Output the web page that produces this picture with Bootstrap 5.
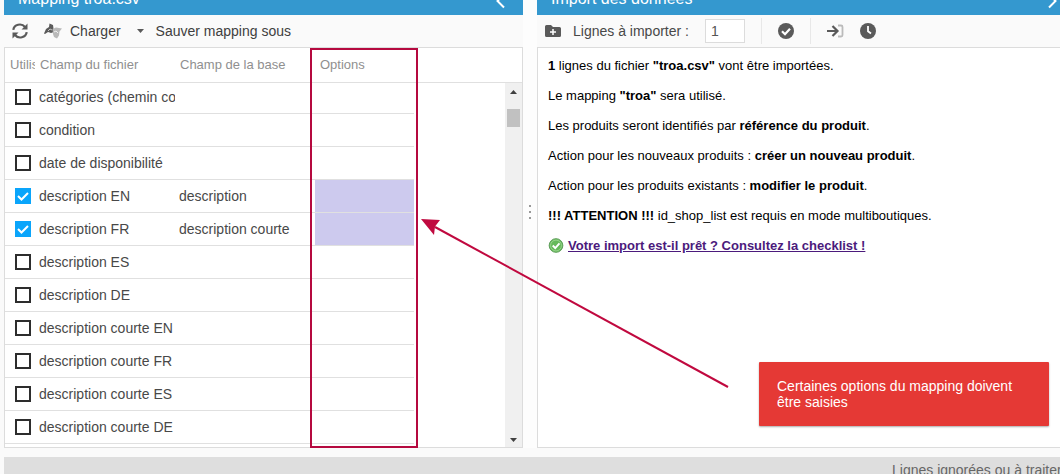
<!DOCTYPE html>
<html lang="fr">
<head>
<meta charset="utf-8">
<meta name="viewport" content="width=device-width, initial-scale=1">
<title>Import CSV</title>
<link href="https://cdn.jsdelivr.net/npm/bootstrap@5.3.0/dist/css/bootstrap.min.css" rel="stylesheet">
<style>
  body { font-family: "Liberation Sans", Arial, sans-serif; font-size: 14px; line-height: 16px; color: #484848; background: #fafafa; }
  .workspace { padding-left: 4px; padding-bottom: 9px; }
  .pane-left { flex: 0 0 calc(50% - 9px); }
  .pane-title { background: #3498cf; color: #fff; height: 15px; padding: 0 18px 6px 14px; }
  .pane-title h2 { font-size: 16px; line-height: 20px; font-weight: 400; }
  .tools { height: 33px; background: #fafafa; border-bottom: 1px solid #dcdcdc; white-space: nowrap; }
  .tools button { border: 0; background: none; padding: 0; color: #404040; line-height: 16px; display: flex; align-items: center; }
  .tools svg { color: #5a5a5a; }
  .tools input { width: 40px; height: 24px; border: 1px solid #dcdcdc; border-radius: 0; padding: 0 5px; font-size: 14px; color: #555; }
  .tool-sep { width: 1px; height: 26px; background: #e8e8e8; }
  .pane-body { background: #fff; border: 1px solid #dcdcdc; border-top: 0; }
  .splitter { width: 14px; background: #fdfdfd; }
  .splitter i { width: 2px; height: 2px; background: #999; }
  .mapping { table-layout: fixed; width: 409px; border-collapse: separate; border-spacing: 0; }
  .mapping th { height: 35px; padding: 0 5px; font-size: 13px; font-weight: 400; color: #8f8f8f; }
  .mapping th:first-child { padding-right: 1px; }
  .mapping th, .mapping td { border-bottom: 1px solid #e0e0e0; white-space: nowrap; overflow: hidden; vertical-align: middle; }
  .mapping td { height: 33px; padding: 0 0 0 4px; }
  .mapping tbody tr:first-child td { height: 31px; padding-bottom: 2px; }
  .mapping td:first-child { padding-left: 10px; }
  .mapping td.to-fill { background: #cdcaee; }
  .mapping .form-check-input { display: block; width: 16px; height: 16px; margin: 0; border: 2px solid #2d2d2d; border-radius: 0; background-color: #fff; }
  .mapping .form-check-input:checked { border-color: #0aa5fb; background-color: #0aa5fb; background-size: 16px; background-position: center;
    background-image: url("data:image/svg+xml,%3Csvg xmlns='http://www.w3.org/2000/svg' viewBox='0 0 16 16'%3E%3Cpath d='M3 8l3.5 3.5L13 5' fill='none' stroke='%23fff' stroke-width='2'/%3E%3C/svg%3E"); }
  .head-rest { height: 35px; border-bottom: 1px solid #e0e0e0; }
  .scroll-track { width: 17px; background: #f0f0f0; padding: 7px 0 5px; }
  .scroll-thumb { width: 13px; height: 18px; margin-top: 15px; background: #c1c1c1; }
  .focus-frame { left: 305px; top: 0; bottom: -1px; width: 108px; border: 2px solid #b5093f; }
  .arrow-note { left: 421px; top: 218px; }
  .report { padding: 10px; font-size: 13px; line-height: 15px; color: #000; }
  .report p { margin-bottom: 15px; }
  .report a { color: #4b1a7c; }
  .alert-note { right: 11px; bottom: 48px; width: 290px; padding: 16px 18px; background: #e53935; color: #fff; box-shadow: 0 1px 2px #0005; border-radius: 1px; }
  .log-bar { height: 17px; margin-left: 4px; padding-top: 5px; background: #dedede; color: #666; white-space: nowrap; }
  .log-bar span { width: 168px; }
</style>
</head>
<body>
<div class="vh-100 d-flex flex-column overflow-hidden position-relative">
  <main class="workspace d-flex flex-grow-1">
    <section class="pane-left d-flex flex-column">
      <header class="pane-title d-flex align-items-end justify-content-between overflow-hidden">
        <h2 class="m-0">Mapping troa.csv</h2>
        <svg width="9" height="16" viewBox="0 0 9 16" fill="none" stroke="#fff" stroke-width="2"><path d="M8 1L1.500 8 8 14.500"/></svg>
      </header>
      <div class="tools d-flex align-items-center ps-2">
        <button type="button" aria-label="Actualiser"><svg width="16" height="16" viewBox="0 0 16 16" fill="none" stroke="currentColor" stroke-width="2.200"><path d="M1.300 6.800A6.500 6 0 0 1 13 4M14.700 9.200A6.500 6 0 0 1 3 12"/><path d="M15.500.5v6h-6zM.5 15.500v-6h6z" fill="currentColor" stroke="none"/></svg></button>
        <button type="button" class="ms-3"><svg class="me-2" width="18" height="16" viewBox="0 0 18 16"><path d="M0 10.500L2 6l3-2 .5-3.500L9 2l1 7-3 1-3-1-3 2z" fill="currentColor"/><path d="M4 8l2-2 2 1" stroke="#ddd" stroke-width=".8" fill="none"/><path d="M8.500 6L12 4.500l6 1-2.500 3-.5 4-2 3-3-1.500-1-3z" fill="#b9b9b9"/><path d="M10 9l2-1 2 2" stroke="#eee" fill="none"/></svg>Charger</button>
        <button type="button" class="ms-3" aria-label="Choisir un mapping"><svg width="7" height="4" viewBox="0 0 7 4"><path d="M0 0h7L3.500 4z" fill="currentColor"/></svg></button>
        <button type="button" class="ms-2 ps-1">Sauver mapping sous</button>
      </div>
      <div class="pane-body d-flex flex-grow-1 position-relative">
        <div class="flex-shrink-0">
          <table class="mapping">
            <colgroup><col style="width:30px"><col style="width:140px"><col style="width:140px"><col style="width:99px"></colgroup>
            <thead><tr><th>Utilis</th><th>Champ du fichier</th><th>Champ de la base</th><th>Options</th></tr></thead>
            <tbody>
              <tr><td><input class="form-check-input" type="checkbox" id="f1"></td><td><label for="f1">catégories (chemin co</label></td><td></td><td></td></tr>
              <tr><td><input class="form-check-input" type="checkbox" id="f2"></td><td><label for="f2">condition</label></td><td></td><td></td></tr>
              <tr><td><input class="form-check-input" type="checkbox" id="f3"></td><td><label for="f3">date de disponibilité</label></td><td></td><td></td></tr>
              <tr><td><input class="form-check-input" type="checkbox" id="f4" checked></td><td><label for="f4">description EN</label></td><td>description</td><td class="to-fill"></td></tr>
              <tr><td><input class="form-check-input" type="checkbox" id="f5" checked></td><td><label for="f5">description FR</label></td><td>description courte</td><td class="to-fill"></td></tr>
              <tr><td><input class="form-check-input" type="checkbox" id="f6"></td><td><label for="f6">description ES</label></td><td></td><td></td></tr>
              <tr><td><input class="form-check-input" type="checkbox" id="f7"></td><td><label for="f7">description DE</label></td><td></td><td></td></tr>
              <tr><td><input class="form-check-input" type="checkbox" id="f8"></td><td><label for="f8">description courte EN</label></td><td></td><td></td></tr>
              <tr><td><input class="form-check-input" type="checkbox" id="f9"></td><td><label for="f9">description courte FR</label></td><td></td><td></td></tr>
              <tr><td><input class="form-check-input" type="checkbox" id="f10"></td><td><label for="f10">description courte ES</label></td><td></td><td></td></tr>
              <tr><td><input class="form-check-input" type="checkbox" id="f11"></td><td><label for="f11">description courte DE</label></td><td></td><td></td></tr>
            </tbody>
          </table>
        </div>
        <div class="flex-grow-1 d-flex flex-column">
          <div class="head-rest"></div>
          <div class="scroll-track flex-grow-1 align-self-end d-flex flex-column align-items-center">
            <svg width="7" height="4" viewBox="0 0 7 4"><path d="M0 4h7L3.500 0z" fill="#404040"/></svg>
            <div class="scroll-thumb"></div>
            <svg class="mt-auto" width="7" height="4" viewBox="0 0 7 4"><path d="M0 0h7L3.500 4z" fill="#404040"/></svg>
          </div>
        </div>
        <div class="focus-frame position-absolute pe-none"></div>
      </div>
    </section>

    <div class="splitter flex-shrink-0 d-flex flex-column align-items-center justify-content-center pb-4"><i></i><i class="my-1"></i><i></i></div>

    <section class="flex-grow-1 d-flex flex-column">
      <header class="pane-title d-flex align-items-end justify-content-between overflow-hidden pe-0">
        <h2 class="m-0">Import des données</h2>
        <svg width="12" height="16" viewBox="0 0 12 16" fill="none" stroke="#fff" stroke-width="2"><path d="M1 1l6.500 7L1 14.500"/></svg>
      </header>
      <div class="tools d-flex align-items-center ps-2">
        <button type="button" aria-label="Nouveau dossier"><svg width="16" height="14" viewBox="0 0 16 14"><path d="M1.500 1H6l2 2h6.500A1.500 1.500 0 0 1 16 4.500v7a1.500 1.500 0 0 1-1.500 1.500h-13A1.500 1.500 0 0 1 0 11.500v-9A1.500 1.500 0 0 1 1.500 1z" fill="currentColor"/><path d="M8 5v6M5 8h6" stroke="#fff" stroke-width="1.500"/></svg></button>
        <label for="lines" class="ms-2 ps-1">Lignes à importer :</label>
        <input id="lines" type="text" value="1" class="ms-3">
        <span class="tool-sep ms-3"></span>
        <button type="button" class="ms-3" aria-label="Vérifier"><svg width="16" height="16" viewBox="0 0 16 16"><circle cx="8" cy="8" r="8" fill="currentColor"/><path d="M4 8.200l3 3 5-5.500" fill="none" stroke="#fff" stroke-width="2.200"/></svg></button>
        <span class="tool-sep ms-3"></span>
        <button type="button" class="ms-3" aria-label="Importer"><svg width="17" height="14" viewBox="0 0 17 14" fill="none"><path d="M0 7h10M5.500 2L10.500 7l-5 5" stroke="currentColor" stroke-width="2.200"/><path d="M11 1.500h3q1.500 0 1.500 1.500v8q0 1.500-1.500 1.500h-3" stroke="#bbb" stroke-width="1.800"/></svg></button>
        <button type="button" class="ms-3" aria-label="Planifier"><svg width="16" height="16" viewBox="0 0 16 16"><circle cx="8" cy="8" r="8" fill="currentColor"/><path d="M8 3v5.200l3 2.300" fill="none" stroke="#fff" stroke-width="1.800"/></svg></button>
      </div>
      <div class="pane-body report border-end-0 flex-grow-1">
        <p><b>1</b> lignes du fichier <b>"troa.csv"</b> vont être importées.</p>
        <p>Le mapping <b>"troa"</b> sera utilisé.</p>
        <p>Les produits seront identifiés par <b>référence du produit</b>.</p>
        <p>Action pour les nouveaux produits : <b>créer un nouveau produit</b>.</p>
        <p>Action pour les produits existants : <b>modifier le produit</b>.</p>
        <p><b>!!! ATTENTION !!!</b> id_shop_list est requis en mode multiboutiques.</p>
        <p class="d-flex align-items-center gap-1"><svg width="16" height="15" viewBox="0 0 16 16"><circle cx="8" cy="8" r="7.300" fill="#66b95a" stroke="#5a9a55"/><circle cx="8" cy="8" r="5.800" fill="none" stroke="#9bd68f"/><path d="M4.500 8l2.700 2.700 4.500-5" fill="none" stroke="#fff" stroke-width="2"/></svg><a href="#"><b>Votre import est-il prêt ? Consultez la checklist !</b></a></p>
      </div>
    </section>
  </main>
  <footer class="log-bar flex-shrink-0 d-flex justify-content-end"><span>Lignes ignorées ou à traiter</span></footer>

  <svg class="arrow-note position-absolute pe-none" width="309" height="171" viewBox="0 0 309 171"><path d="M14 9L307 169" stroke="#c0093f" stroke-width="2"/><path d="M0 1L19 2 14 8.500 13 17z" fill="#c0093f"/></svg>
  <div class="alert-note position-absolute" role="alert">Certaines options du mapping doivent être saisies</div>
</div>
<script src="https://cdn.jsdelivr.net/npm/bootstrap@5.3.0/dist/js/bootstrap.bundle.min.js"></script>
</body>
</html>
